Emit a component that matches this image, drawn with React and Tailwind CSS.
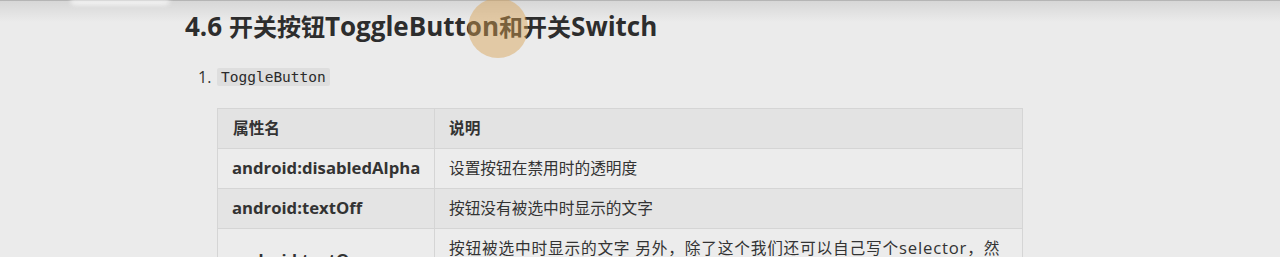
const rows = [
  { name: 'android:disabledAlpha', desc: '设置按钮在禁用时的透明度', bg: 'bg-[#ececec]' },
  { name: 'android:textOff', desc: '按钮没有被选中时显示的文字', bg: 'bg-[#e4e4e4]' },
];

function L({ children }) {
  // latin runs are set a touch larger than the CJK text, like the source page
  return <span className="text-[16.7px] leading-none">{children}</span>;
}

export default function App() {
  return (
    <div
      className="relative h-[257px] overflow-hidden bg-[#ebebeb] text-[#333]"
      style={{ fontFamily: '"Open Sans", "Noto Sans CJK SC", sans-serif' }}
    >
      {/* top edge shading */}
      <div className="absolute inset-x-0 top-0 h-[22px] bg-gradient-to-b from-[#d6d6d6] to-[#ebebeb]" />
      <div className="absolute inset-x-0 top-0 h-px bg-[#b5b5b5]" />
      <div className="absolute left-[70px] top-0 h-[5px] w-[100px] rounded-b-full bg-[#f4f4f4] blur-[2px]" />

      <div className="relative pl-[185px] pt-[10px]">
        <h1 className="text-[24px] font-bold leading-[32px] text-[#2d2d2d]">
          <span className="text-[26px]">4.6 </span>开关按钮<span className="text-[26px]">ToggleButton</span>和开关
          <span className="text-[26px]">Switch</span>
        </h1>

        <div className="mt-[22px] flex items-center pl-[13px] text-[16px]">
          <span className="w-[19px]">1.</span>
          <code
            className="rounded-[2px] bg-[#dedede] px-[4px] leading-[18px] text-[14.5px] text-[#2b2b2b]"
            style={{ fontFamily: '"DejaVu Sans Mono", monospace' }}
          >
            ToggleButton
          </code>
        </div>

        <table className="ml-[32px] mt-[19px] w-[806px] table-fixed border-collapse text-[15.7px] leading-[23px]">
          <colgroup>
            <col className="w-[217px]" />
            <col />
          </colgroup>
          <thead>
            <tr className="bg-[#e3e3e3]">
              <th className="border border-[#d5d5d5] px-[15px] py-[8px] text-left font-bold">属性名</th>
              <th className="border border-[#d5d5d5] px-[14px] py-[8px] text-left font-bold">说明</th>
            </tr>
          </thead>
          <tbody>
            {rows.map((r) => (
              <tr key={r.name} className={r.bg}>
                <td className="whitespace-nowrap border border-[#d5d5d5] px-[14px] py-[8px] font-bold">
                  <L>{r.name}</L>
                </td>
                <td className="border border-[#d5d5d5] px-[14px] py-[8px]">{r.desc}</td>
              </tr>
            ))}
            <tr className="bg-[#ececec]">
              <td className="border border-[#d5d5d5] px-[14px] py-[8px] font-bold">
                <L>android:textOn</L>
              </td>
              <td className="border border-[#d5d5d5] px-[14px] py-[8px] tracking-[0.8px]">
                按钮被选中时显示的文字 另外，除了这个我们还可以自己写个<L>selector</L>，然
                <br />
                后设置下<L>background</L>就可以了
              </td>
            </tr>
          </tbody>
        </table>
      </div>

      {/* cursor highlight */}
      <div className="absolute left-[468px] top-[-2px] h-[60px] w-[60px] rounded-full bg-[rgba(214,160,80,0.45)]" />
    </div>
  );
}
